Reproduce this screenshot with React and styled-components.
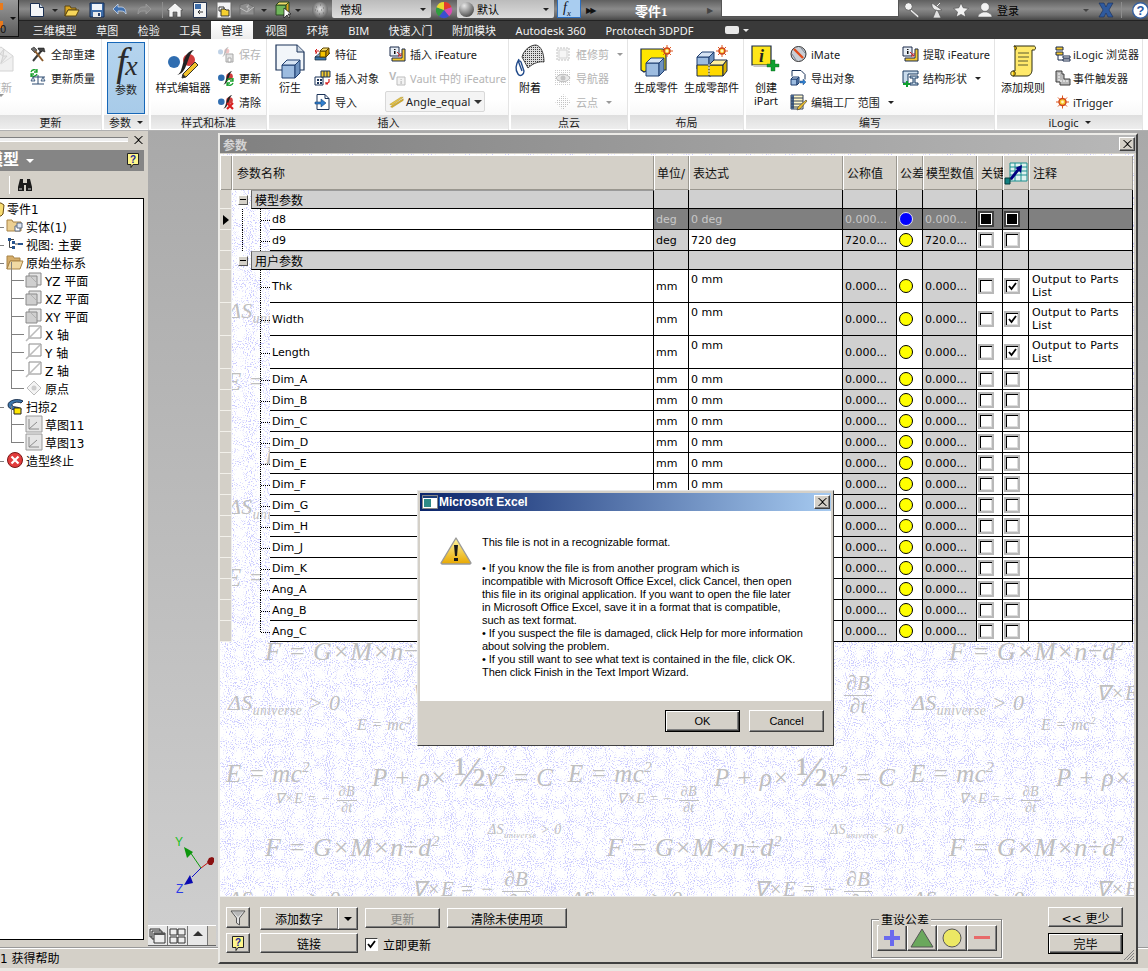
import React from "react";
import styled, { createGlobalStyle } from "styled-components";

const UI = `"DejaVu Sans", "Noto Sans CJK SC", sans-serif`;
const RIBBON_FONT = `"Noto Sans", "Noto Sans CJK SC", sans-serif`;
const SERIF = `"Liberation Serif", serif`;
const FACE = "#d4d0c8";

const Global = createGlobalStyle`
  html, body { margin: 0; padding: 0; background: ${FACE}; }
  #root { width: 1148px; height: 971px; }
  * { box-sizing: border-box; }
`;

const Page = styled.div`
  position: relative;
  width: 1148px;
  height: 971px;
  overflow: hidden;
  display: flex;
  flex-direction: column;
  font-family: ${UI};
  font-size: 11px;
  color: #000;
  background: ${FACE};
`;

/* ---------- icons ---------- */

const IconSvg = styled.svg`
  display: block;
  flex: none;
  overflow: visible;
`;

const Icon = ({ w = 16, h = 16, vb, children }) => (
  <IconSvg width={w} height={h} viewBox={vb || `0 0 ${w} ${h}`}>
    {children}
  </IconSvg>
);

const Cube = ({ x = 0, y = 0, s = 12, d = 4, front = "#9dbce0", top = "#d5e3f3", side = "#6f93c0", line = "#1f3f70" }) => (
  <g stroke={line} strokeWidth="1" strokeLinejoin="round">
    <path d={`M${x} ${y + d}h${s}v${s}h-${s}z`} fill={front} />
    <path d={`M${x} ${y + d}l${d} -${d}h${s}l-${d} ${d}z`} fill={top} />
    <path d={`M${x + s} ${y + d}l${d} -${d}v${s}l-${d} ${d}z`} fill={side} />
  </g>
);

const Spark = ({ x, y, r = 5 }) => (
  <g>
    <path d={`M${x - r - 2} ${y}h${2 * r + 4}M${x} ${y - r - 2}v${2 * r + 4}M${x - r} ${y - r}l${2 * r} ${2 * r}M${x + r} ${y - r}l-${2 * r} ${2 * r}`} stroke="#e05a20" strokeWidth="1" />
    <circle cx={x} cy={y} r={r - 1} fill="#f7c52a" stroke="#d0451c" strokeWidth="1.4" />
    <circle cx={x} cy={y} r={1.4} fill="#fff6c0" />
  </g>
);

const StyleMark = () => (
  <g>
    <circle cx="6" cy="14" r="6" fill="#2f6db0" />
    <circle cx="21" cy="12" r="6" fill="#d23c3c" />
    <path d="M8 27C17 27 12 4 26 2C19 6 20 27 8 27z" fill="#222" />
  </g>
);

const Pencil = () => (
  <g>
    <path d="M27 14l3 3-12 12-4 1 1-4z" fill="#f2c22c" stroke="#33302a" strokeWidth="1" />
    <path d="M15 26l3 3-4 1z" fill="#333" />
  </g>
);

const GreenArrows = ({ x = 0, y = 0 }) => (
  <path transform={`translate(${x} ${y})`} d="M1 3a3.5 3.5 0 0 1 6-1M7 0v3H4M7 5a3.5 3.5 0 0 1-6 1M1 8V5h3" fill="none" stroke="#18a02c" strokeWidth="1.3" />
);

const Icons = {
  newDoc: (
    <Icon>
      <path d="M1.5 1.5h9l4 4v9h-13z" fill="#f4f6f8" stroke="#1b2f50" />
      <path d="M10.5 1.5v4h4" fill="#c9d3de" stroke="#1b2f50" />
    </Icon>
  ),
  open: (
    <Icon>
      <path d="M1 4h5l1 2h5v2H4l-3 6z" fill="#d9a520" stroke="#5a4510" />
      <path d="M4 8h11l-3 6H1z" fill="#f7d65a" stroke="#5a4510" />
    </Icon>
  ),
  save: (
    <Icon>
      <path d="M1 1h14v14H1z" fill="#3d6ca8" stroke="#152a50" />
      <path d="M3 2h10v6H3z" fill="#eef3fa" />
      <path d="M4 10h8v5H4z" fill="#e9eaec" />
      <path d="M9 11h2v3H9z" fill="#25406e" />
    </Icon>
  ),
  undo: (
    <Icon>
      <path d="M6 2L1 7l5 5V9h3c2.5 0 4 1 5 3 0-5-2-7-5-7H6z" fill="#3f6fae" stroke="#c9d7ea" strokeWidth=".8" />
    </Icon>
  ),
  redo: (
    <Icon>
      <path d="M10 2l5 5-5 5V9H7c-2.5 0-4 1-5 3 0-5 2-7 5-7h3z" fill="#8a8a8a" stroke="#9c9c9c" strokeWidth=".8" />
    </Icon>
  ),
  home: (
    <Icon>
      <path d="M8 1L0 8h2v7h4v-5h4v5h4V8h2z" fill="#f2f2f2" stroke="#444" strokeWidth=".6" />
    </Icon>
  ),
  docArrow: (
    <Icon w={14}>
      <path d="M.5.5h13v15H.5z" fill="#f3f3f3" stroke="#26344e" />
      <path d="M2 2h6v5H2z" fill="#3d6ca8" />
      <path d="M10 10H5M7 8l-2 2 2 2" fill="none" stroke="#333" />
    </Icon>
  ),
  clip: (
    <Icon>
      <path d="M1 0h14v16H1z" fill="#f5f5f5" stroke="#6b6b6b" />
      <path d="M3 5h5v4H3z" fill="#fff" stroke="#333" />
      <path d="M5 7h4l1 1h3v6H5z" fill="#f5d030" stroke="#333" />
    </Icon>
  ),
  mail: (
    <Icon>
      <path d="M1 3l7-2 7 4v8H1z" fill="#8d8d8d" stroke="#6a6a6a" />
      <path d="M1 6l7 4 7-5" fill="none" stroke="#c0c0c0" />
      <path d="M7 5l3-3-1 4h2l-3 4 1-4z" fill="#bcbcbc" />
    </Icon>
  ),
  cubeCursor: (
    <Icon>
      <Cube x={0} y={0} s={10} d={3} front="#6fb55a" top="#f0dc6a" side="#d9a520" line="#2a4a20" />
      <path d="M8 6l0 10 3-3 2 3 1-1-2-3h3z" fill="#fff" stroke="#111" strokeWidth=".7" />
    </Icon>
  ),
  disc: (
    <Icon>
      <defs>
        <radialGradient id="discG" cx=".5" cy=".45" r=".6">
          <stop offset="0" stopColor="#e8e8e8" />
          <stop offset="1" stopColor="#565656" />
        </radialGradient>
      </defs>
      <circle cx="8" cy="8" r="8" fill="url(#discG)" />
      <path d="M4 5h1M8 3h1M11 6h1M5 9h1M9 8h1M7 12h1M11 11h1M3 8h1" stroke="#6d6d6d" />
    </Icon>
  ),
  wheel: (
    <Icon>
      <path d="M8 8V0a8 8 0 0 1 7.5 5.2z" fill="#e23b2e" />
      <path d="M8 8l7.5-2.8A8 8 0 0 1 13 14.3z" fill="#d84cb0" />
      <path d="M8 8l5 6.3A8 8 0 0 1 3 14.3z" fill="#3a4fd0" />
      <path d="M8 8l-5 6.3A8 8 0 0 1 .5 5.2z" fill="#2f9e3f" />
      <path d="M8 8L.5 5.2A8 8 0 0 1 8 0z" fill="#e9d92e" />
    </Icon>
  ),
  sphere: (
    <Icon w={15} h={15}>
      <defs>
        <radialGradient id="sphG" cx=".35" cy=".25" r=".8">
          <stop offset="0" stopColor="#e8e8e8" />
          <stop offset="1" stopColor="#4a4a4a" />
        </radialGradient>
      </defs>
      <circle cx="7.5" cy="7.5" r="7.5" fill="url(#sphG)" />
    </Icon>
  ),
  key: (
    <Icon>
      <circle cx="4.5" cy="4.5" r="3.8" fill="#f4f4f4" stroke="#555" strokeWidth=".8" />
      <path d="M7 7l8 7-1 2-8-7z" fill="#e9e9e9" stroke="#555" strokeWidth=".7" />
    </Icon>
  ),
  dish: (
    <Icon>
      <path d="M3 1c-1 6 4 9 10 7z" fill="#ececec" stroke="#555" strokeWidth=".7" />
      <path d="M7 8l-3 8h8l-3-7z" fill="#e0e0e0" stroke="#555" strokeWidth=".7" />
      <path d="M8 4l3-3" stroke="#eee" />
    </Icon>
  ),
  star: (
    <Icon>
      <path d="M8 1l2.2 4.8 5.3.6-4 3.5 1.2 5.1L8 12.4 3.3 15l1.2-5.1-4-3.5 5.3-.6z" fill="#f2f2f2" stroke="#444" strokeWidth=".6" />
    </Icon>
  ),
  user: (
    <Icon>
      <circle cx="8" cy="5" r="4.3" fill="#f4f4f4" stroke="#555" strokeWidth=".5" />
      <path d="M1 15c0-3 3-4 5-5h4c2 1 5 2 5 5z" fill="#f0f0f0" stroke="#555" strokeWidth=".5" />
    </Icon>
  ),
  xLogo: (
    <Icon>
      <path d="M1 1h5l2 4 2-4h5l-4 7 4 7h-5l-2-4-2 4H1l4-7z" fill="#2f5a9e" stroke="#172c56" strokeWidth=".6" />
    </Icon>
  ),
  helpRound: (
    <Icon w={17} h={17}>
      <circle cx="8.5" cy="8.5" r="7.8" fill="#fff" stroke="#355f9e" strokeWidth="1.4" />
      <text x="8.5" y="13" textAnchor="middle" fontSize="13" fontWeight="700" fill="#2a5aa5" fontFamily="Liberation Sans">?</text>
    </Icon>
  ),
  mailBig: (
    <Icon w={26} h={26}>
      <path d="M1 8L13 1l12 9v15H1z" fill="#f0f0f0" stroke="#d4d4d4" />
      <path d="M1 9l12 9 12-8" fill="none" stroke="#dcdcdc" />
      <path d="M12 8l4-5-1 7h4l-6 7 2-7z" fill="#e6e6e6" stroke="#d2d2d2" />
    </Icon>
  ),
  tools: (
    <Icon>
      <path d="M3 15L12 4" stroke="#3a3a3a" strokeWidth="2" />
      <path d="M1 3l3-2 3 3-2 3z" fill="#6e6e6e" stroke="#222" strokeWidth=".6" />
      <path d="M13 15L5 5" stroke="#8a5a2a" strokeWidth="2" />
      <path d="M8 2h6l1 4-3-1-1 1-3-3z" fill="#444" stroke="#111" strokeWidth=".5" />
    </Icon>
  ),
  scale: (
    <Icon>
      <GreenArrows x={0} y={-1} />
      <path d="M8 5v9M2 14h12M3 7h12" stroke="#2c4a70" fill="none" />
      <path d="M1 11l2-4 2 4zM11 11l2-4 2 4z" fill="#d8e0ea" stroke="#2c4a70" strokeWidth=".8" />
    </Icon>
  ),
  styleBig: (
    <Icon w={31} h={31}>
      <StyleMark />
      <Pencil />
    </Icon>
  ),
  styleSave: (
    <Icon>
      <g opacity=".3">
        <g transform="scale(.42)"><StyleMark /></g>
      </g>
      <path d="M8 8h7v8H8z" fill="#e4e4e4" stroke="#a8a8a8" />
      <path d="M10 12h3v4h-3z" fill="#fff" stroke="#a8a8a8" />
    </Icon>
  ),
  styleUpdate: (
    <Icon>
      <g transform="scale(.55)"><StyleMark /></g>
      <GreenArrows x={8} y={8} />
    </Icon>
  ),
  styleClear: (
    <Icon>
      <g transform="scale(.55)"><StyleMark /></g>
      <path d="M9 9l6 6M15 9l-6 6" stroke="#d81e1e" strokeWidth="2.2" />
    </Icon>
  ),
  derive: (
    <Icon w={30} h={34}>
      <path d="M1 1h21l7 7v18H1z" fill="#f2f6fa" stroke="#1a3258" strokeWidth="1.2" />
      <path d="M22 1v7h7" fill="#cfd9e5" stroke="#1a3258" />
      <Cube x={7} y={16} s={13} d={5} />
    </Icon>
  ),
  feature: (
    <Icon w={17}>
      <path d="M1 11l5-4h10l-4 4z" fill="#8bb3d9" stroke="#123" strokeWidth=".7" />
      <path d="M1 11h11v3H1z" fill="#3d78ad" stroke="#123" strokeWidth=".7" />
      <Cube x={6} y={2} s={6} d={3} front="#f5c400" top="#ffe36e" side="#d09a00" line="#5a4200" />
      <path d="M2 8V5h3M3 3L1 5l2 2" fill="none" stroke="#d52020" />
    </Icon>
  ),
  insertObj: (
    <Icon w={17}>
      <path d="M1 7h8v8H1z" fill="#fff" stroke="#1a3258" />
      <path d="M3 9h2v2H3zM6 9h2v2H6zM3 12h2v2H3zM6 12h2v2H6z" fill="#1a3258" />
      <path d="M7 1h9v6H7z" fill="#f5c92e" stroke="#1a3258" />
      <path d="M10 1v6M13 1v6" stroke="#1a3258" />
      <path d="M15 9v3l-3 2M12 12v2h2" fill="none" stroke="#d52020" strokeWidth="1.2" />
    </Icon>
  ),
  importDoc: (
    <Icon w={16}>
      <path d="M3 .5h8l4 4v11H3z" fill="#fff" stroke="#1a3258" />
      <path d="M11 .5v4h4" fill="none" stroke="#1a3258" />
      <path d="M1 8h6V5l5 4-5 4v-3H1z" fill="#2f7fd0" stroke="#14406e" strokeWidth=".6" />
    </Icon>
  ),
  iFeat: (
    <Icon w={17}>
      <path d="M1 1h9v9H1z" fill="#e8eef5" stroke="#1a2a4a" />
      <path d="M5 3h1.5v1H5zM5 5h1.5v3H5z" fill="#111" />
      <path d="M8 6l4 4M12 7v3H9" fill="none" stroke="#d52020" />
      <path d="M13 3h3v12H3v-3h10z" fill="#f5c92e" stroke="#1a2a4a" />
    </Icon>
  ),
  vault: (
    <Icon w={17}>
      <text x="0" y="10" fontSize="11" fontWeight="700" fill="#b8b8b8" fontFamily="Liberation Sans">V</text>
      <path d="M8 7h8v8H8z" fill="#f2f2f2" stroke="#bdbdbd" />
      <path d="M11.5 9h1.2v1h-1.2zM11.5 11h1.2v3h-1.2z" fill="#bdbdbd" />
    </Icon>
  ),
  beam: (
    <Icon w={15} h={12} vb="0 0 19 14">
      <path d="M1 10L15 1h3L4 11z" fill="#e9c84a" stroke="#a88a20" strokeWidth=".6" />
      <path d="M2 13L18 3v2L4 14z" fill="#d8b030" stroke="#a88a20" strokeWidth=".6" />
    </Icon>
  ),
  attach: (
    <Icon w={30} h={36}>
      <defs>
        <pattern id="dotP" width="2" height="2" patternUnits="userSpaceOnUse">
          <rect width="1" height="1" fill="#3a3a3a" />
        </pattern>
      </defs>
      <path d="M7 14C9 6 16 2 21 2c5 1 8 8 8 17-4-1-11 1-16 6-2-4-4-7-6-11z" fill="#ddd" stroke="#444" />
      <path d="M7 14C9 6 16 2 21 2c5 1 8 8 8 17-4-1-11 1-16 6-2-4-4-7-6-11z" fill="url(#dotP)" />
      <path d="M4 16c-3 5-4 11-1 15 2 3 6 1 6-3l-3-9c-1-2-3-1-2 1l3 8" fill="none" stroke="#214a8a" strokeWidth="1.4" />
    </Icon>
  ),
  cropBox: (
    <Icon>
      <path d="M2 2h12v12H2z" fill="#f6f6f6" stroke="#c2c2c2" strokeDasharray="2 1" />
      <path d="M4 4h8v8H4z" fill="none" stroke="#d4d4d4" />
    </Icon>
  ),
  eye: (
    <Icon>
      <path d="M0 0h16v16H0z" fill="url(#dotP)" opacity=".25" />
      <path d="M1 8c3-5 11-5 14 0-3 5-11 5-14 0z" fill="#e8e8e8" stroke="#bcbcbc" />
      <circle cx="8" cy="8" r="2.5" fill="#c4c4c4" />
    </Icon>
  ),
  cloud: (
    <Icon>
      <path d="M8 0l8 8-8 8-8-8z" fill="url(#dotP)" opacity=".3" />
    </Icon>
  ),
  makePart: (
    <Icon w={32} h={32}>
      <path d="M1 4h22l3 3v18H8l-4 2-3-2z" fill="#ffe600" stroke="#1a2a4a" strokeWidth="1.2" />
      <Cube x={6} y={13} s={13} d={5} />
      <Spark x={27} y={6} r={4} />
    </Icon>
  ),
  makeParts: (
    <Icon w={34} h={34}>
      <Cube x={2} y={8} s={12} d={5} />
      <path d="M2 21h14v11H2z" fill="#ffd900" stroke="#1a2a4a" />
      <path d="M14 21h14v11H14z" fill="#ffd900" stroke="#1a2a4a" />
      <path d="M14 21l5-5h13l-4 5z" fill="#fff0a0" stroke="#1a2a4a" />
      <path d="M28 21l4-5v11l-4 5z" fill="#d9b100" stroke="#1a2a4a" />
      <path d="M14 20v12" stroke="#fff" strokeDasharray="2 1" />
      <Spark x={27} y={7} r={4} />
    </Icon>
  ),
  iPart: (
    <Icon w={30} h={30}>
      <path d="M1 1h19v19H1z" fill="#ffe61a" stroke="#1a2a4a" strokeWidth="1.2" />
      <path d="M1 20l2 2h17l1-2" fill="#c8c8c8" />
      <text x="10.5" y="17" textAnchor="middle" fontFamily="Liberation Serif" fontStyle="italic" fontWeight="700" fontSize="18" fill="#222">i</text>
      <path d="M20 15h4v4h4v3h-4v4h-4v-4h-4v-3h4z" fill="#0fa030" stroke="#0a6020" strokeWidth=".4" />
    </Icon>
  ),
  iMate: (
    <Icon w={17}>
      <circle cx="8.5" cy="8" r="7.5" fill="#c9ced6" stroke="#333" />
      <path d="M4 3l9 9" stroke="#e04a1a" strokeWidth="2.4" />
      <path d="M2 8l4 6M11 2l4 5" stroke="#7d8694" />
    </Icon>
  ),
  exportObj: (
    <Icon w={17}>
      <path d="M2 .5h9l4 4v5M2 .5v6" fill="#fff" stroke="#1a3258" />
      <Cube x={1} y={7} s={6} d={2} />
      <path d="M10 11h3V9l3 3-3 3v-2h-3z" fill="#2f7fd0" stroke="#14406e" strokeWidth=".4" />
    </Icon>
  ),
  table: (
    <Icon w={17}>
      <path d="M1 1h12v14H1z" fill="#fff7c8" stroke="#33405a" />
      <path d="M1 1h3v14H1z" fill="#45648e" />
      <path d="M1 4h12M1 7h12M1 10h12M1 13h9" stroke="#33405a" />
      <path d="M16 6l1 1-7 8-3 1 1-3z" fill="#f2c22c" stroke="#333" strokeWidth=".6" />
    </Icon>
  ),
  shape: (
    <Icon w={17}>
      <path d="M1 1h15v3H6v9H1z" fill="#c9dbeb" stroke="#1a3a60" />
      <path d="M8 6h8v2h-3v5h3v2H8v-2h3V8H8z" fill="#c9dbeb" stroke="#1a3a60" />
      <path d="M1 13h3v-2h2v2h2v2H6v2H4v-2H1z" fill="#0fa030" />
    </Icon>
  ),
  scroll: (
    <Icon w={28} h={34}>
      <path d="M5 2h20c2 0 2 4 0 4h-2v20c0 3-2 6-5 6H4c-3 0-3-5 0-5h2V6C6 4 5 3 5 2z" fill="#ffe96a" stroke="#2a2a10" />
      <path d="M9 9h11M9 13h11M9 17h10M9 21h10" stroke="#5a5a30" />
      <path d="M5 2c3 0 3 4 1 4M4 27c3 0 3 5 0 5" fill="#e4b400" stroke="#2a2a10" />
    </Icon>
  ),
  ilogicBrowser: (
    <Icon w={17}>
      <path d="M2 1h7v3H2z" fill="#f5c92e" stroke="#1a2a4a" />
      <path d="M2 6h7v3H2z" fill="#f5c92e" stroke="#1a2a4a" />
      <path d="M9 10h7v2H9zM9 13h7v2H9z" fill="#fff" stroke="#1a2a4a" />
      <path d="M4 9v5h5" fill="none" stroke="#1a2a4a" />
    </Icon>
  ),
  eventTrig: (
    <Icon w={17}>
      <path d="M2 1h6v3h2v5h6v6H6v-3H2z" fill="#b8b8b8" stroke="#3d3d3d" />
      <path d="M5 3v8h9" fill="none" stroke="#fff" strokeDasharray="2 1" />
    </Icon>
  ),
  trigger: (
    <Icon w={17}>
      <Spark x={8.5} y={8} r={4.5} />
    </Icon>
  ),
  help: (
    <Icon w={12} h={15}>
      <path d="M.5.5h11v11H6l-2 3v-3H.5z" fill="#fff68a" stroke="#222" />
      <text x="6" y="9.5" textAnchor="middle" fontSize="10" fontWeight="700" fill="#1a2a9a" fontFamily="Liberation Sans">?</text>
    </Icon>
  ),
  binoculars: (
    <Icon w={16} h={14}>
      <path d="M3 1h3v4h4V1h3l2 8v4H9V7H7v6H1V9z" fill="#1b1b1b" />
      <path d="M2 10h3v2H2zM11 10h3v2h-3z" fill="#777" />
    </Icon>
  ),
  part: (
    <Icon w={4} h={15}>
      <path d="M-8 2h9l3 2-1 9-2 2H-8z" fill="#f8dc72" stroke="#6b4b10" />
      <path d="M-6 5h6v6h-6z" fill="#fff3b8" />
    </Icon>
  ),
  bodies: (
    <Icon w={16} h={16}>
      <path d="M0 2h5l1 2h8v9H0z" fill="#eccf92" stroke="#a88346" />
      <path d="M8 8h5v5H8z" fill="#fff" stroke="#5a6a85" />
      <path d="M10 5h5v5h-5z" fill="#dfe6f0" stroke="#5a6a85" />
    </Icon>
  ),
  views: (
    <Icon w={16} h={14}>
      <path d="M1 1h3v3H1zM5 4h3v3H5zM5 9h3v3H5zM11 6h5v2h-5z" fill="#26538e" />
      <path d="M2.5 4v6.5H5M4 2.5h3M8 7h3" stroke="#444" fill="none" />
    </Icon>
  ),
  folderOpen: (
    <Icon w={16} h={14}>
      <path d="M0 1h6l1 2h6v3H3l-3 8z" fill="#d6ae6a" stroke="#a88346" />
      <path d="M3 6h13l-3 8H0z" fill="#f1d9a3" stroke="#a88346" />
    </Icon>
  ),
  plane: (
    <Icon>
      <path d="M3 1h12v12H3z" fill="#e3e3e3" stroke="#8a8a8a" />
      <path d="M0 4h11v11H0z" fill="#cfcfcf" stroke="#8a8a8a" />
      <path d="M4 4l7 7" stroke="#b0b0b0" />
    </Icon>
  ),
  axis: (
    <Icon>
      <path d="M3 0h12v12H3z" fill="#fff" stroke="#8a8a8a" />
      <path d="M0 15L14 1" stroke="#bcbcbc" strokeWidth="1.6" />
    </Icon>
  ),
  origin: (
    <Icon>
      <path d="M8 1l7 7-7 7-7-7z" fill="#f4f4f4" stroke="#bdbdbd" />
      <circle cx="8" cy="8" r="2.5" fill="#cdcdcd" />
    </Icon>
  ),
  sweep: (
    <Icon w={16}>
      <path d="M1 7c0-5 10-7 15-4l-2 2C10 3 5 5 5 7c0 3 9 1 9 5l-4 2c2-3-9-1-9-7z" fill="#3d78ad" stroke="#12243f" strokeWidth=".9" />
      <path d="M7 10h7v6H7z" fill="#ffe600" stroke="#222" />
    </Icon>
  ),
  sketch: (
    <Icon>
      <path d="M0 0h16v16H0z" fill="#e5e5e5" stroke="#9a9a9a" />
      <path d="M3 13V3M3 13h10M3 13l8-7" stroke="#8c8c8c" fill="none" />
    </Icon>
  ),
  stopErr: (
    <Icon>
      <circle cx="8" cy="8" r="7.5" fill="#e23c3c" stroke="#7a1616" />
      <path d="M4.5 4.5l7 7M11.5 4.5l-7 7" stroke="#fff" strokeWidth="2.2" />
    </Icon>
  ),
  tableLink: (
    <Icon w={24} h={24}>
      <path d="M2 1h22v21H2z" fill="#d4d0c8" />
      <path d="M6 2h17v18H6z" fill="#dff2ef" stroke="#1a8f8f" />
      <path d="M6 6h17M6 10h17M6 14h17M11 2v18M17 2v18" stroke="#1a8f8f" />
      <path d="M5 18L13 8l-2-1 7-3-1 8-2-2-7 9z" fill="#000080" />
      <path d="M1 17h5v6H1z" fill="#128080" stroke="#063c3c" />
    </Icon>
  ),
  tick: (
    <Icon w={9} h={9}>
      <path d="M1 4l2.5 3L8 1" fill="none" stroke="#000" strokeWidth="1.8" />
    </Icon>
  ),
  funnel: (
    <Icon w={16} h={16}>
      <path d="M1 1h14L9.5 8v7l-3-2V8z" fill="#e4e4e4" stroke="#555" />
      <path d="M3 2h10L8 7z" fill="#b8b8b8" />
    </Icon>
  ),
  cascade: (
    <Icon w={17} h={16}>
      <path d="M1 1h10v8H1z" fill="#ddd" stroke="#333" />
      <path d="M3 3h10v8H3z" fill="#ddd" stroke="#333" />
      <path d="M5 5h11v10H5z" fill="#eee" stroke="#333" />
      <path d="M5 5h11v2H5z" fill="#555" />
    </Icon>
  ),
  tile: (
    <Icon w={17} h={16}>
      <path d="M1 1h7v6H1zM9 1h7v6H9zM1 9h7v6H1zM9 9h7v6H9z" fill="#eee" stroke="#333" />
    </Icon>
  ),
  warning: (
    <Icon w={32} h={28}>
      <defs>
        <linearGradient id="warnG" x1="0" y1="0" x2="0" y2="1">
          <stop offset="0" stopColor="#fff6a0" />
          <stop offset="1" stopColor="#e8a800" />
        </linearGradient>
      </defs>
      <path d="M16 1L31 26l-1 1H2l-1-1z" fill="url(#warnG)" stroke="#9a9a9a" strokeWidth="1.4" strokeLinejoin="round" />
      <path d="M14 8h4l-1 11h-2zM14 21h4v3h-4z" fill="#1a1a1a" />
    </Icon>
  ),
  excel: (
    <Icon w={16} h={14}>
      <path d="M.5.5h15v13H.5z" fill="#fff" stroke="#888" />
      <path d="M1 1h14v2H1z" fill="#1c3d78" />
      <path d="M2 4h7v8H2z" fill="#2e8a87" />
    </Icon>
  ),
  closeX: (
    <Icon w={9} h={8}>
      <path d="M1 0l3.5 3L8 0h1L5 4l4 4H8L4.5 5 1 8H0l4-4-4-4z" fill="#000" />
    </Icon>
  ),
};

/* ---------- title bar ---------- */

const TitleBar = styled.div`
  height: 20px;
  flex: none;
  display: flex;
  align-items: center;
  background: linear-gradient(#5f5f5f, #8a8a8a 45%, #6d6d6d 75%, #474747);
`;

const AppButton = styled.div`
  position: absolute;
  left: 0;
  top: 0;
  width: 19px;
  height: 37px;
  z-index: 3;
  background: linear-gradient(#9a9a9a, #5b5b5b);
  border-right: 1px solid #111;
  border-bottom: 1px solid #111;
  color: #fff;
  font-size: 10px;
`;

const OrangeBlock = styled.div`
  width: 3px;
  height: 7px;
  margin-top: ${(p) => p.$mt}px;
  background: #e87a1c;
`;

const AppDigit = styled.span`
  position: absolute;
  left: 0;
  bottom: 1px;
  color: #111;
`;

const AppCaret = styled.span`
  position: absolute;
  right: 2px;
  top: 17px;
  border-top: 3px solid #111;
  border-left: 3px solid transparent;
  border-right: 3px solid transparent;
`;

const Qat = styled.span`
  display: flex;
  align-items: center;
  flex: none;
  margin-left: ${(p) => p.$ml || 0}px;
`;

const Caret = styled.span`
  display: inline-block;
  flex: none;
  width: 0;
  height: 0;
  margin-left: ${(p) => p.$ml || 0}px;
  border-top: ${(p) => p.$s || 3}px solid ${(p) => p.$color || "#222"};
  border-left: ${(p) => p.$s || 3}px solid transparent;
  border-right: ${(p) => p.$s || 3}px solid transparent;
`;

const Divider = styled.span`
  width: 1px;
  height: 16px;
  margin-left: ${(p) => p.$ml}px;
  background: #8d8d8d;
  flex: none;
`;

const Combo = styled.div`
  width: ${(p) => p.$w}px;
  margin-left: ${(p) => p.$ml}px;
  height: 18px;
  align-self: flex-start;
  flex: none;
  display: flex;
  align-items: center;
  gap: 3px;
  padding: 0 5px 0 ${(p) => p.$pl}px;
  font-size: 11px;
  background: linear-gradient(#bcbcbc, #dcdcdc);
  border-radius: 0 0 2px 2px;
`;

const ComboText = styled.span`
  flex: 1;
`;

const FxButton = styled.div`
  width: 24px;
  height: 18px;
  margin-left: 3px;
  align-self: flex-start;
  flex: none;
  padding-left: 5px;
  background: #a9cdf0;
  border: 1px solid #2b6fc0;
  border-top: 0;
  font: italic 14px ${SERIF};
  color: #112;
`;

const TitleText = styled.span`
  width: 32px;
  margin-left: 40px;
  flex: none;
  font: bold 13px ${SERIF}, "Noto Sans CJK SC";
  color: #fff;
  white-space: nowrap;
`;

const Arrows = styled.span`
  width: 9px;
  margin-left: ${(p) => p.$ml}px;
  flex: none;
  font-size: 8px;
  color: ${(p) => p.$color || "#111"};
  letter-spacing: -2px;
`;

const SearchBox = styled.div`
  width: 178px;
  height: 17px;
  margin-left: 5px;
  flex: none;
  align-self: flex-start;
  background: #fff;
  border: 1px solid #555;
  border-top: 0;
`;

const LoginText = styled.span`
  margin-left: 4px;
  width: 24px;
  flex: none;
  font-size: 11px;
  white-space: nowrap;
`;

/* ---------- ribbon tabs ---------- */

const TabBar = styled.div`
  height: 19px;
  flex: none;
  display: flex;
  align-items: flex-end;
  padding-left: 23px;
  font-family: ${RIBBON_FONT};
  background: #3a3a3a;
  border-top: 1px solid #222;
`;

const Tab = styled.div`
  height: 18px;
  padding: 0 9.75px;
  margin-right: ${(p) => (p.$active ? 3 : 0)}px;
  display: flex;
  align-items: center;
  font-size: 11px;
  white-space: nowrap;
  color: ${(p) => (p.$active ? "#222" : "#f2f2f2")};
  background: ${(p) => (p.$active ? "linear-gradient(#fff, #ededed)" : "transparent")};
`;

const TabTool = styled.div`
  display: flex;
  align-items: center;
  gap: 4px;
  height: 18px;
  margin-left: 22px;
`;

const TabToolBox = styled.span`
  width: 14px;
  height: 8px;
  background: #e8e8e8;
  border-radius: 2px;
`;

/* ---------- ribbon ---------- */

const Ribbon = styled.div`
  height: 91px;
  flex: none;
  display: flex;
  gap: 2px;
  font-family: ${RIBBON_FONT};
  background: #fff;
  overflow: hidden;
`;

const RibbonGroup = styled.section`
  width: ${(p) => p.$w}px;
  flex: none;
  display: flex;
  flex-direction: column;
  border-right: 1px solid #e4e4e4;
`;

const GroupBody = styled.div`
  flex: 1;
  display: flex;
  padding-top: 3px;
  background: linear-gradient(#fff, #fff 80%, #f8f8f8);
`;

const GroupLabel = styled.div`
  height: 14px;
  margin-bottom: 1px;
  display: flex;
  align-items: center;
  justify-content: center;
  gap: 6px;
  font-size: 11px;
  color: #222;
  background: linear-gradient(#dedede, #eeeeee);
`;

const BigTool = styled.div`
  width: ${(p) => p.$w}px;
  margin-left: ${(p) => p.$ml || 0}px;
  flex: none;
  display: flex;
  flex-direction: column;
  align-items: center;
  line-height: 13px;
  font-size: 11px;
  text-align: center;
  white-space: nowrap;
  color: ${(p) => (p.$off ? "#b0b0b0" : "#111")};
`;

const IconSlot = styled.div`
  height: 39px;
  display: flex;
  align-items: flex-start;
  justify-content: center;
  padding-top: ${(p) => (p.$pt || 0) + 1}px;
`;

const ToolColumn = styled.div`
  width: ${(p) => p.$w}px;
  margin-left: ${(p) => p.$ml || 0}px;
  flex: none;
  display: flex;
  flex-direction: column;
`;

const SmallTool = styled.div`
  height: 24px;
  display: flex;
  align-items: center;
  gap: ${(p) => p.$gap || 5}px;
  font-size: 11px;
  white-space: nowrap;
  color: ${(p) => (p.$off ? "#b4b4b4" : "#222")};
`;

const IconBox = styled.span`
  width: 16px;
  flex: none;
  display: flex;
`;

const FxBig = styled.div`
  width: 38px;
  height: 72px;
  margin: 0 0 0 3px;
  display: flex;
  flex-direction: column;
  align-items: center;
  background: linear-gradient(#b5d4ee, #a8cbe9);
  border: 1px solid #1667b8;
  font-size: 11px;
  color: #222;
`;

const FxMark = styled.div`
  height: 38px;
  font: italic 40px/38px ${SERIF};
  letter-spacing: -2px;
  color: #2b2b2b;
  white-space: nowrap;
`;

const FxSub = styled.span`
  font-size: 28px;
`;

const StyleCombo = styled.div`
  width: 100px;
  height: 21px;
  margin: 1px 0 0 -4px;
  display: flex;
  align-items: center;
  gap: 2px;
  padding-left: 3px;
  font-size: 11px;
  color: #222;
  background: #f4f4f4;
  border: 1px solid #d8d8d8;
  border-radius: 2px;
  white-space: nowrap;
  letter-spacing: 0.1px;
`;

/* ---------- workspace ---------- */

const Workspace = styled.div`
  flex: 1;
  min-height: 0;
  display: flex;
  border-top: 1px solid #b0b0b0;
`;

const Browser = styled.aside`
  width: 148px;
  flex: none;
  display: flex;
  flex-direction: column;
  padding-top: 2px;
  background: ${FACE};
`;

const GripBar = styled.div`
  height: 13px;
  display: flex;
  align-items: center;
  gap: 5px;
  padding-right: 5px;
  flex: none;
`;

const GripLines = styled.div`
  flex: 1;
  height: 5px;
  margin-right: 1px;
  border-top: 1px solid #808080;
  border-bottom: 1px solid #fff;
  background: #eeeeee;
`;

const BrowserHead = styled.div`
  height: 21px;
  width: 144px;
  margin-top: 4px;
  flex: none;
  display: flex;
  align-items: center;
  overflow: hidden;
  font-size: 16px;
  line-height: 19px;
  font-weight: 700;
  color: #fff;
  background: #858585;
`;

const HeadTitle = styled.span`
  margin-left: -13px;
  margin-top: -2px;
  white-space: nowrap;
`;

const HeadHelp = styled.span`
  margin-left: auto;
  margin-right: 5px;
`;

const BrowserBar = styled.div`
  height: 27px;
  flex: none;
  display: flex;
  align-items: center;
`;

const BarSep = styled.span`
  width: 1px;
  height: 18px;
  margin: 0 7px 0 9px;
  background: #909090;
  border-right: 1px solid #fff;
`;

const TreeBox = styled.div`
  width: 144px;
  height: 742px;
  flex: none;
  background: #fff;
  border-top: 1px solid #000;
  border-right: 1px solid #000;
  border-bottom: 1px solid #000;
`;

const TreeRow = styled.div`
  position: relative;
  height: 18px;
  display: flex;
  align-items: center;
  gap: 3px;
  padding-left: ${(p) => (p.$level === 2 ? 26 : p.$level === 1 ? 7 : 0)}px;
  font-size: 12px;
  white-space: nowrap;

  &::before {
    content: ${(p) => (p.$level === 0 ? "none" : '""')};
    position: absolute;
    left: ${(p) => (p.$level === 2 ? 11 : 0)}px;
    top: ${(p) => (p.$level === 2 ? -9 : 9)}px;
    width: ${(p) => (p.$level === 2 ? 12 : 4)}px;
    height: ${(p) => (p.$level === 2 ? 18 : 1)}px;
    border-left: ${(p) => (p.$level === 2 ? "1px solid #808080" : "0")};
    border-bottom: 1px solid #808080;
  }
`;

const Viewport = styled.main`
  position: relative;
  flex: 1;
  background: linear-gradient(#a9a9a9, #cfcfcf);
`;

const TriadBox = styled.div`
  position: absolute;
  left: 20px;
  top: 703px;
`;

const DocTabs = styled.div`
  position: absolute;
  left: 0;
  top: 794px;
  display: flex;
  width: 68px;
  height: 21px;
  background: ${FACE};
  border-top: 1px solid #fff;
  border-bottom: 1px solid #666;
`;

const DocTab = styled.div`
  width: 20px;
  display: flex;
  align-items: center;
  justify-content: center;
  background: #e8e8e8;
  border-right: 1px solid #777;
`;

const UpArrow = styled.span`
  border-bottom: 5px solid #333;
  border-left: 5px solid transparent;
  border-right: 5px solid transparent;
  margin-bottom: 5px;
`;

const StatusBar = styled.div`
  height: 24px;
  flex: none;
  display: flex;
  align-items: center;
  font-size: 12px;
  padding-bottom: 2px;
  border-top: 1px solid #999;
  border-bottom: 3px solid #e9e7e2;
  box-shadow: inset 0 1px #fff;
`;

/* ---------- parameter window ---------- */

const ParamWindow = styled.div`
  position: absolute;
  left: 218px;
  top: 133px;
  width: 920px;
  height: 831px;
  z-index: 2;
  display: flex;
  flex-direction: column;
  background: ${FACE};
  border: 2px solid;
  border-color: #ecebe7 #404040 #404040 #ecebe7;
`;

const ParamTitle = styled.div`
  height: 18px;
  flex: none;
  display: flex;
  align-items: center;
  justify-content: space-between;
  padding: 0 1px 0 3px;
  font-size: 12px;
  font-weight: 700;
  color: #d4d4d4;
  background: linear-gradient(90deg, #808080, #b8b8b8);
`;

const WinBtn = styled.div`
  width: ${(p) => p.$w || 16}px;
  height: 14px;
  display: flex;
  align-items: center;
  justify-content: center;
  background: ${FACE};
  border: 1px solid;
  border-color: #fff #404040 #404040 #fff;
  box-shadow: inset -1px -1px #808080;
`;

const GridCanvas = styled.div`
  position: relative;
  width: 914px;
  height: 743px;
  margin-top: 1px;
  flex: none;
  overflow: hidden;
  background: #fff;
  border-bottom: 1px solid #eee;
`;

const NoiseLayer = styled.svg`
  position: absolute;
  inset: 0;
  display: block;
`;

const Formula = styled.span`
  position: absolute;
  font-family: ${SERIF};
  font-style: italic;
  line-height: 1;
  letter-spacing: 0.4px;
  color: #bfbfbf;
  white-space: nowrap;
  transform: translateY(-50%);
`;

const Sup = styled.sup`
  font-size: 0.6em;
  line-height: 0;
  vertical-align: super;
`;

const Sub = styled.sub`
  font-size: 0.62em;
  line-height: 0;
`;

const BigHalf = styled.span`
  font-size: 1.7em;
  font-style: normal;
  line-height: 0;
`;

const Fraction = styled.span`
  display: inline-flex;
  flex-direction: column;
  align-items: center;
  vertical-align: middle;
  margin-left: 2px;
`;

const FractionTop = styled.span`
  border-bottom: 1px solid #bfbfbf;
  padding: 0 2px 1px;
`;

const Table = styled.div`
  position: relative;
  padding-top: 1px;
  width: 913px;
`;

const COLS = "35px 154px 54px 26px 54px 26px 26px 104px";

const Row = styled.div`
  display: grid;
  grid-template-columns: ${(p) => (p.$group ? "12px 19px 403px" : "12px 38px 384px")} ${COLS};
  height: ${(p) => p.$h}px;
`;

const Cell = styled.div`
  display: flex;
  align-items: ${(p) => (p.$top ? "flex-start" : "center")};
  padding: ${(p) => (p.$top ? "3px" : "0")} 0 0 ${(p) => (p.$pl === undefined ? 2 : p.$pl)}px;
  overflow: hidden;
  white-space: nowrap;
  font-size: 11px;
  color: ${(p) => p.$color || "#000"};
  background: ${(p) => p.$bg || "#fff"};
  border-right: 1px solid #000;
  border-bottom: 1px solid #000;
`;

const HeadCell = styled.div`
  display: flex;
  align-items: center;
  padding-left: ${(p) => (p.$pl === undefined ? 4 : p.$pl)}px;
  overflow: hidden;
  white-space: nowrap;
  font-size: 12px;
  color: #111;
  background: ${FACE};
  grid-column: ${(p) => (p.$span ? `span ${p.$span}` : "auto")};
  box-shadow: inset 1px 1px #fff, inset -1px -1px #9a978f;
`;

const RowHead = styled.div`
  display: flex;
  align-items: center;
  justify-content: center;
  background: ${FACE};
  box-shadow: inset 0 -1px #f2f0ea;
  border-right: 1px solid #eee;
`;

const RowPointer = styled.span`
  border-left: 6px solid #000;
  border-top: 5px solid transparent;
  border-bottom: 5px solid transparent;
`;

const TreeCell = styled.div`
  position: relative;

  &::before {
    content: "";
    position: absolute;
    left: 28px;
    top: 0;
    bottom: ${(p) => (p.$last ? "50%" : "0")};
    border-left: 1px dotted #000;
  }
  &::after {
    content: "";
    position: absolute;
    left: 29px;
    right: 0;
    top: 50%;
    border-top: 1px dotted #000;
  }
`;

const OuterLine = styled.span`
  position: absolute;
  left: 10px;
  top: 0;
  bottom: 0;
  border-left: 1px dotted #000;
`;

const GroupTree = styled.div`
  position: relative;
`;

const MinusBox = styled.span`
  position: absolute;
  left: 6px;
  top: 5px;
  width: 10px;
  height: 10px;
  background: ${FACE};
  border: 1px solid;
  border-color: #fff #555 #555 #fff;

  &::after {
    content: "";
    position: absolute;
    left: 1px;
    right: 1px;
    top: 3px;
    border-top: 1px solid #000;
  }
`;

const GroupName = styled.div`
  display: flex;
  align-items: center;
  padding-left: 3px;
  font-size: 12px;
  background: #d0d0d0;
  border-top: 1px solid #9a9a9a;
  border-left: 1px solid #666;
  border-bottom: 1px solid #000;
  border-right: 1px solid #000;
`;

const Dot = styled.span`
  width: 14px;
  height: 14px;
  border-radius: 50%;
  flex: none;
  background: ${(p) => (p.$blue ? "#0000ff" : "#ffff00")};
  border: 1px solid ${(p) => (p.$blue ? "#e8e8e8" : "#000")};
`;

const Check = styled.span`
  width: 16px;
  height: 16px;
  flex: none;
  display: flex;
  align-items: center;
  justify-content: center;
  background: ${(p) => (p.$dark ? "#000" : "#fff")};
  border: 2px solid ${(p) => (p.$dark ? "#404040" : "#b8b8b8")};
  box-shadow: ${(p) => (p.$dark ? "inset 0 0 0 1px #fff" : "inset 1px 1px #000, inset -1px -1px #ddd")};
`;

const Note = styled.div`
  white-space: normal;
  line-height: 13px;
  letter-spacing: 0.2px;
`;

/* ---------- parameter footer ---------- */

const Footer = styled.div`
  position: relative;
  flex: 1;
  display: flex;
  padding: 10px 0 0 6px;
`;

const FootCol = styled.div`
  width: ${(p) => p.$w}px;
  margin-left: ${(p) => p.$ml || 0}px;
  flex: none;
  display: flex;
  flex-direction: column;
  gap: ${(p) => p.$gap || 0}px;
`;

const Btn = styled.div`
  width: ${(p) => (p.$w ? `${p.$w}px` : "100%")};
  height: ${(p) => p.$h || 21}px;
  margin-left: ${(p) => p.$ml || 0}px;
  display: flex;
  align-items: center;
  justify-content: center;
  flex: none;
  font-size: 12px;
  color: ${(p) => (p.$off ? "#8a8a86" : "#000")};
  background: ${FACE};
  border: 1px solid;
  border-color: ${(p) => (p.$strong ? "#000" : "#fff #404040 #404040 #fff")};
  box-shadow: ${(p) => (p.$strong ? "inset 1px 1px #fff, inset -1px -1px #404040, inset -2px -2px #808080" : "inset -1px -1px #808080")};
`;

const SplitLabel = styled.span`
  flex: 1;
  text-align: center;
`;

const SplitArrow = styled.span`
  width: 20px;
  height: 100%;
  display: flex;
  align-items: center;
  justify-content: center;
  border-left: 1px solid #808080;
  box-shadow: inset 1px 0 #fff;
`;

const BlackCaret = styled.span`
  border-top: 4px solid #000;
  border-left: 4px solid transparent;
  border-right: 4px solid transparent;
`;

const FootRow = styled.div`
  display: flex;
  align-items: ${(p) => (p.$center ? "center" : "flex-start")};
  margin-top: ${(p) => p.$mt || 0}px;
`;

const CheckLabel = styled.span`
  margin-left: 5px;
  font-size: 12px;
`;

const SunkenBox = styled.span`
  width: 13px;
  height: 13px;
  display: flex;
  align-items: center;
  justify-content: center;
  background: #fff;
  border: 1px solid;
  border-color: #404040 #fff #fff #404040;
`;

const TolGroup = styled.div`
  position: relative;
  width: 131px;
  height: 39px;
  margin: 12px 0 0 304px;
  flex: none;
  padding: 5px 0 0 5px;
  display: flex;
  border: 1px solid #808080;
  box-shadow: inset 1px 1px #fff, 1px 1px #fff;
`;

const TolLegend = styled.span`
  position: absolute;
  left: 7px;
  top: -6px;
  padding: 0 2px;
  height: 12px;
  line-height: 12px;
  overflow: hidden;
  font-size: 12px;
  background: ${FACE};
`;

const Grip = styled.span`
  position: absolute;
  right: 1px;
  bottom: 1px;
`;

/* ---------- excel dialog ---------- */

const ExcelDialog = styled.div`
  position: absolute;
  left: 417px;
  top: 490px;
  width: 417px;
  height: 256px;
  z-index: 4;
  display: flex;
  flex-direction: column;
  padding: 2px;
  background: ${FACE};
  border: 1px solid;
  border-color: #e8e8e8 #404040 #404040 #e8e8e8;
`;

const ExcelTitle = styled.div`
  height: 18px;
  flex: none;
  display: flex;
  align-items: center;
  gap: 1px;
  padding: 0 1px 0 2px;
  font: bold 12px "Liberation Sans", sans-serif;
  color: #fff;
  background: linear-gradient(90deg, #0a246a, #a6caf0);
`;

const ExcelClose = styled(WinBtn)`
  margin-left: auto;
`;

const ExcelBody = styled.div`
  height: 190px;
  flex: none;
  display: flex;
  padding: 26px 0 0 20px;
  background: #fff;
`;

const ExcelText = styled.div`
  margin: -1px 0 0 10px;
  font: 11px/13px "Liberation Sans", sans-serif;
  letter-spacing: -0.06px;
  white-space: nowrap;
  color: #000;
`;

const ExcelFirst = styled.div`
  margin-bottom: 13px;
`;

const ExcelFoot = styled.div`
  flex: 1;
  display: flex;
  justify-content: flex-end;
  gap: 9px;
  padding: 9px 7px 0 0;
`;

const ExcelBtn = styled(Btn)`
  width: 75px;
  height: 22px;
  font: 11px "Liberation Sans", sans-serif;
`;

/* ---------- data ---------- */

const WATERMARKS = [
  { dx: 0, dy: 0, size: 26, body: <>F = G×M×n÷d<Sup>2</Sup></> },
  { dx: -37, dy: 51, size: 22, body: <>ΔS<Sub>universe</Sub> &gt; 0</> },
  { dx: 92, dy: 73, size: 16, body: <>E = mc<Sup>2</Sup></> },
  { dx: -39, dy: 121, size: 25, body: <>E = mc<Sup>2</Sup></> },
  { dx: 107, dy: 125, size: 25, body: <>P + ρ× <BigHalf>½</BigHalf>v<Sup>2</Sup> = C</> },
  { dx: 10, dy: 148, size: 14, body: <>∇×E = − <Fraction><FractionTop>∂B</FractionTop><span>∂t</span></Fraction></> },
  { dx: 223, dy: 178, size: 14, body: <>ΔS<Sub>universe</Sub> &gt; 0</> },
  { dx: 147, dy: 43, size: 21, body: <>∇×E = − <Fraction><FractionTop>∂B</FractionTop><span>∂t</span></Fraction></> },
];

const TILE_X = [265, 607, 949];
const TILE_Y = [260, 456, 652, 848];

// formulas that would lie wholly behind the table or the excel box are left out
const isVisible = (x, y) => {
  if (x > 270 && y < 632) return false;
  if (x > 430 && x < 690 && y > 500 && y < 735) return false;
  return true;
};

const DIMS = ["Dim_A", "Dim_B", "Dim_C", "Dim_D", "Dim_E", "Dim_F", "Dim_G", "Dim_H", "Dim_J", "Dim_K", "Ang_A", "Ang_B", "Ang_C"];
const USERS = ["Thk", "Width", "Length"];
const GREY = "#d0d0d0";
const DARK = "#808080";

const TREE = [
  [0, "part", "零件1"],
  [1, "bodies", "实体(1)"],
  [1, "views", "视图: 主要"],
  [1, "folderOpen", "原始坐标系"],
  [2, "plane", "YZ 平面"],
  [2, "plane", "XZ 平面"],
  [2, "plane", "XY 平面"],
  [2, "axis", "X 轴"],
  [2, "axis", "Y 轴"],
  [2, "axis", "Z 轴"],
  [2, "origin", "原点"],
  [1, "sweep", "扫掠2"],
  [2, "sketch", "草图11"],
  [2, "sketch", "草图13"],
  [1, "stopErr", "造型终止"],
];

const TABS = ["三维模型", "草图", "检验", "工具", "管理", "视图", "环境", "BIM", "快速入门", "附加模块", "Autodesk 360", "Prototech 3DPDF"];

const Tool = ({ icon, off, gap, children }) => (
  <SmallTool $off={off} $gap={gap}>
    <IconBox>{Icons[icon]}</IconBox>
    {children}
  </SmallTool>
);

const Big = ({ icon, w, ml, pt, off, children }) => (
  <BigTool $w={w} $ml={ml} $off={off}>
    <IconSlot $pt={pt}>{Icons[icon]}</IconSlot>
    {children}
  </BigTool>
);

const GroupRow = ({ title }) => (
  <Row $h={19} $group>
    <RowHead />
    <GroupTree>
      <MinusBox />
    </GroupTree>
    <GroupName>{title}</GroupName>
    {COLS.split(" ").map((c, i) => (
      <Cell key={i} $bg={GREY} />
    ))}
  </Row>
);

const DataRow = ({ name, h, unit, expr, value, top, dark, checked, note, pointer, outer, last, unitBg }) => {
  const rowBg = dark ? DARK : undefined;
  const color = dark ? "#c8c8c8" : undefined;
  return (
    <Row $h={h}>
      <RowHead>{pointer && <RowPointer />}</RowHead>
      <TreeCell $last={last}>{outer && <OuterLine />}</TreeCell>
      <Cell>{name}</Cell>
      <Cell $bg={rowBg || unitBg} $color={color}>{unit}</Cell>
      <Cell $bg={rowBg} $color={color} $top={top}>{expr}</Cell>
      <Cell $bg={rowBg || GREY} $color={color}>{value}</Cell>
      <Cell $bg={rowBg}><Dot $blue={dark} /></Cell>
      <Cell $bg={rowBg || GREY} $color={color}>{value}</Cell>
      <Cell $bg={rowBg} $pl={1}><Check $dark={dark} /></Cell>
      <Cell $bg={rowBg} $pl={1}><Check $dark={dark}>{checked && Icons.tick}</Check></Cell>
      <Cell $bg={rowBg} $pl={3}>{note && <Note>{note}</Note>}</Cell>
    </Row>
  );
};

const Triad = () => (
  <svg width="60" height="70" viewBox="0 0 60 70">
    <path d="M22 18L33 34" stroke="#0a9a0a" strokeWidth="1" />
    <path d="M33 34L41 28" stroke="#c01010" strokeWidth="1" />
    <path d="M33 34L24 43" stroke="#1010c8" strokeWidth="1" />
    <path d="M16 13l9 5-6 6z" fill="#0c960c" />
    <path d="M41 24l3-1 2 1 0 4-2 3-3 0-2-3z" fill="#8a1010" />
    <path d="M22 41l3 8-9 2z" fill="#0a0ab0" />
    <text x="7" y="12" fontSize="12" fill="#22c022" fontFamily="Liberation Sans">Y</text>
    <text x="8" y="59" fontSize="12" fill="#2a3ae8" fontFamily="Liberation Sans">Z</text>
  </svg>
);

export default function App() {
  return (
    <Page>
      <Global />

      <AppButton>
        <OrangeBlock $mt={3} />
        <OrangeBlock $mt={11} />
        <AppCaret />
        <AppDigit>0</AppDigit>
      </AppButton>

      <TitleBar>
        <Qat $ml={29}>{Icons.newDoc}</Qat>
        <Caret $ml={7} />
        <Qat $ml={6}>{Icons.open}</Qat>
        <Qat $ml={9}>{Icons.save}</Qat>
        <Qat $ml={7}>{Icons.undo}</Qat>
        <Qat $ml={8}>{Icons.redo}</Qat>
        <Divider $ml={10} />
        <Qat $ml={4}>{Icons.home}</Qat>
        <Qat $ml={10}>{Icons.docArrow}</Qat>
        <Qat $ml={9}>{Icons.clip}</Qat>
        <Qat $ml={7}>{Icons.mail}</Qat>
        <Caret $ml={6} />
        <Qat $ml={9}>{Icons.cubeCursor}</Qat>
        <Caret $ml={3} />
        <Qat $ml={11}>{Icons.disc}</Qat>
        <Combo $w={99} $ml={4} $pl={8}>
          <ComboText>常规</ComboText>
          <Caret />
        </Combo>
        <Qat $ml={5}>{Icons.wheel}</Qat>
        <Combo $w={97} $ml={5} $pl={2}>
          {Icons.sphere}
          <ComboText>默认</ComboText>
          <Caret />
        </Combo>
        <FxButton>
          f<Sub>x</Sub>
        </FxButton>
        <Arrows $ml={5}>▶▶</Arrows>
        <TitleText>零件1</TitleText>
        <Arrows $ml={40} $color="#444">▶</Arrows>
        <SearchBox />
        <Qat $ml={5}>{Icons.key}</Qat>
        <Qat $ml={9}>{Icons.dish}</Qat>
        <Qat $ml={8}>{Icons.star}</Qat>
        <Qat $ml={8}>{Icons.user}</Qat>
        <LoginText>登录</LoginText>
        <Caret $ml={62} $color="#444" />
        <Qat $ml={9}>{Icons.xLogo}</Qat>
        <Divider $ml={7} />
        <Qat $ml={10}>{Icons.helpRound}</Qat>
      </TitleBar>

      <TabBar>
        {TABS.map((t) => (
          <Tab key={t} $active={t === "管理"}>
            {t}
          </Tab>
        ))}
        <TabTool>
          <TabToolBox />
          <Caret $color="#e8e8e8" />
        </TabTool>
      </TabBar>

      <Ribbon>
        <RibbonGroup $w={102}>
          <GroupBody>
            <Big icon="mailBig" w={26} ml={-12} pt={3} off>
              更新
              <br />
              <Caret $color="#999" />
            </Big>
            <ToolColumn $w={70} $ml={16}>
              <Tool icon="tools">全部重建</Tool>
              <Tool icon="scale">更新质量</Tool>
            </ToolColumn>
          </GroupBody>
          <GroupLabel>更新</GroupLabel>
        </RibbonGroup>

        <RibbonGroup $w={45}>
          <GroupBody>
            <FxBig>
              <FxMark>
                f<FxSub>x</FxSub>
              </FxMark>
              参数
            </FxBig>
          </GroupBody>
          <GroupLabel>
            参数 <Caret />
          </GroupLabel>
        </RibbonGroup>

        <RibbonGroup $w={116}>
          <GroupBody>
            <Big icon="styleBig" w={56} ml={4} pt={5}>样式编辑器</Big>
            <ToolColumn $w={50} $ml={7}>
              <Tool icon="styleSave" off>保存</Tool>
              <Tool icon="styleUpdate">更新</Tool>
              <Tool icon="styleClear">清除</Tool>
            </ToolColumn>
          </GroupBody>
          <GroupLabel>样式和标准</GroupLabel>
        </RibbonGroup>

        <RibbonGroup $w={240}>
          <GroupBody>
            <Big icon="derive" w={30} ml={6} pt={1}>衍生</Big>
            <ToolColumn $w={75} $ml={9}>
              <Tool icon="feature">特征</Tool>
              <Tool icon="insertObj">插入对象</Tool>
              <Tool icon="importDoc">导入</Tool>
            </ToolColumn>
            <ToolColumn $w={115}>
              <Tool icon="iFeat">插入 iFeature</Tool>
              <Tool icon="vault" off>Vault 中的 iFeature</Tool>
              <StyleCombo>
                {Icons.beam}
                Angle_equal
                <Caret $ml={2} $s={4} $color="#333" />
              </StyleCombo>
            </ToolColumn>
          </GroupBody>
          <GroupLabel>插入</GroupLabel>
        </RibbonGroup>

        <RibbonGroup $w={117}>
          <GroupBody>
            <Big icon="attach" w={30} ml={4}>附着</Big>
            <ToolColumn $w={80} $ml={10}>
              <Tool icon="cropBox" off>框修剪 <Caret $ml={3} $color="#999" /></Tool>
              <Tool icon="eye" off>导航器</Tool>
              <Tool icon="cloud" off>云点 <Caret $ml={3} $color="#999" /></Tool>
            </ToolColumn>
          </GroupBody>
          <GroupLabel>点云</GroupLabel>
        </RibbonGroup>

        <RibbonGroup $w={114}>
          <GroupBody>
            <Big icon="makePart" w={44} ml={4} pt={2}>生成零件</Big>
            <Big icon="makeParts" w={55} ml={6} pt={1}>生成零部件</Big>
          </GroupBody>
          <GroupLabel>布局</GroupLabel>
        </RibbonGroup>

        <RibbonGroup $w={249}>
          <GroupBody>
            <Big icon="iPart" w={30} ml={5} pt={2}>
              创建
              <br />
              iPart
            </Big>
            <ToolColumn $w={112} $ml={9}>
              <Tool icon="iMate">iMate</Tool>
              <Tool icon="exportObj">导出对象</Tool>
              <Tool icon="table">编辑工厂 范围 <Caret $ml={3} /></Tool>
            </ToolColumn>
            <ToolColumn $w={85}>
              <Tool icon="iFeat">提取 iFeature</Tool>
              <Tool icon="shape">结构形状 <Caret $ml={3} /></Tool>
            </ToolColumn>
          </GroupBody>
          <GroupLabel>编写</GroupLabel>
        </RibbonGroup>

        <RibbonGroup $w={146}>
          <GroupBody>
            <Big icon="scroll" w={44} ml={4} pt={1}>添加规则</Big>
            <ToolColumn $w={90} $ml={9}>
              <Tool icon="ilogicBrowser" gap={3}>iLogic 浏览器</Tool>
              <Tool icon="eventTrig" gap={3}>事件触发器</Tool>
              <Tool icon="trigger" gap={3}>iTrigger</Tool>
            </ToolColumn>
          </GroupBody>
          <GroupLabel>
            iLogic <Caret />
          </GroupLabel>
        </RibbonGroup>
      </Ribbon>

      <Workspace>
        <Browser>
          <GripBar>
            <GripLines />
            {Icons.closeX}
          </GripBar>
          <BrowserHead>
            <HeadTitle>模型</HeadTitle>
            <Caret $ml={7} $s={4} $color="#fff" />
            <HeadHelp>{Icons.help}</HeadHelp>
          </BrowserHead>
          <BrowserBar>
            <BarSep />
            {Icons.binoculars}
          </BrowserBar>
          <TreeBox>
            {TREE.map(([level, icon, text]) => (
              <TreeRow key={text} $level={level}>
                {Icons[icon]}
                {text}
              </TreeRow>
            ))}
          </TreeBox>
        </Browser>
        <Viewport>
          <TriadBox>
            <Triad />
          </TriadBox>
          <DocTabs>
            <DocTab>{Icons.cascade}</DocTab>
            <DocTab>{Icons.tile}</DocTab>
            <DocTab>
              <UpArrow />
            </DocTab>
          </DocTabs>
        </Viewport>
      </Workspace>

      <StatusBar>1 获得帮助</StatusBar>

      <ParamWindow>
        <ParamTitle>
          参数
          <WinBtn>{Icons.closeX}</WinBtn>
        </ParamTitle>

        <GridCanvas>
          <NoiseLayer width="914" height="743">
            <filter id="speckle" x="0" y="0" width="100%" height="100%" colorInterpolationFilters="sRGB">
              <feTurbulence type="fractalNoise" baseFrequency="0.95" numOctaves="1" seed="4" result="fine" />
              <feTurbulence type="fractalNoise" baseFrequency="0.07" numOctaves="2" seed="9" result="wide" />
              <feComposite in="fine" in2="wide" operator="arithmetic" k1="0" k2="0.9" k3="0.12" k4="0" />
              <feColorMatrix values="0 0 0 0 0.8  0 0 0 0 0.8  0 0 0 0 1  9 0 0 0 -4.9" />
            </filter>
            <rect width="914" height="743" filter="url(#speckle)" />
          </NoiseLayer>

          {TILE_Y.map((ty) =>
            TILE_X.map((tx) =>
              WATERMARKS.filter((w) => isVisible(tx + w.dx, ty + w.dy)).map((w) => (
                <Formula
                  key={`${tx}-${ty}-${w.dx}`}
                  style={{ left: tx + w.dx - 220, top: ty + w.dy - 154, fontSize: w.size }}
                >
                  {w.body}
                </Formula>
              ))
            )
          )}

          <Table>
            <Row $h={35}>
              <HeadCell />
              <HeadCell $span={2} $pl={5}>参数名称</HeadCell>
              <HeadCell $pl={3}>单位/</HeadCell>
              <HeadCell>表达式</HeadCell>
              <HeadCell>公称值</HeadCell>
              <HeadCell $pl={3}>公差</HeadCell>
              <HeadCell $pl={3}>模型数值</HeadCell>
              <HeadCell>关键</HeadCell>
              <HeadCell $pl={1}>{Icons.tableLink}</HeadCell>
              <HeadCell>注释</HeadCell>
            </Row>
            <GroupRow title="模型参数" />
            <DataRow name="d8" h={21} unit="deg" expr="0 deg" value="0.000..." dark pointer outer />
            <DataRow name="d9" h={21} unit="deg" expr="720 deg" value="720.0..." unitBg={GREY} outer />
            <GroupRow title="用户参数" />
            {USERS.map((u) => (
              <DataRow key={u} name={u} h={33} unit="mm" expr="0 mm" value="0.000..." top checked note="Output to Parts List" />
            ))}
            {DIMS.map((d, i) => (
              <DataRow key={d} name={d} h={21} unit="mm" expr="0 mm" value="0.000..." last={i === DIMS.length - 1} />
            ))}
          </Table>
        </GridCanvas>

        <Footer>
          <FootCol $w={24} $gap={5}>
            <Btn>{Icons.funnel}</Btn>
            <Btn $h={20}>{Icons.help}</Btn>
          </FootCol>
          <FootCol $w={98} $ml={10} $gap={3}>
            <Btn $h={23}>
              <SplitLabel>添加数字</SplitLabel>
              <SplitArrow>
                <BlackCaret />
              </SplitArrow>
            </Btn>
            <Btn $h={20}>链接</Btn>
          </FootCol>
          <FootCol $w={202} $ml={7}>
            <FootRow $mt={1}>
              <Btn $w={75} $h={20} $off>更新</Btn>
              <Btn $w={120} $h={20} $ml={7}>清除未使用项</Btn>
            </FootRow>
            <FootRow $center $mt={8}>
              <SunkenBox>{Icons.tick}</SunkenBox>
              <CheckLabel>立即更新</CheckLabel>
            </FootRow>
          </FootCol>
          <TolGroup>
            <TolLegend>重设公差</TolLegend>
            <Btn $w={30} $h={26}>
              <Icon w={18} h={18}>
                <path d="M7 1h4v6h6v4h-6v6H7v-6H1V7h6z" fill="#6a6aee" />
              </Icon>
            </Btn>
            <Btn $w={30} $h={26}>
              <Icon w={24} h={20}>
                <path d="M12 1l11 18H1z" fill="#6aa85c" stroke="#555" />
              </Icon>
            </Btn>
            <Btn $w={30} $h={26}>
              <Icon w={20} h={20}>
                <circle cx="10" cy="10" r="9" fill="#ece864" stroke="#555" />
              </Icon>
            </Btn>
            <Btn $w={30} $h={26}>
              <Icon w={18} h={4}>
                <path d="M1 0h16v3H1z" fill="#e86a6a" />
              </Icon>
            </Btn>
          </TolGroup>
          <FootCol $w={75} $ml={46} $gap={6}>
            <Btn $h={20}>&lt;&lt; 更少</Btn>
            <Btn $h={21} $strong>完毕</Btn>
          </FootCol>
          <Grip>
            <Icon w={12} h={12}>
              <path d="M11 1L1 11M11 4l-7 7M11 7l-4 4M11 10l-1 1" stroke="#808080" />
            </Icon>
          </Grip>
        </Footer>
      </ParamWindow>

      <ExcelDialog>
        <ExcelTitle>
          {Icons.excel}
          Microsoft Excel
          <ExcelClose>{Icons.closeX}</ExcelClose>
        </ExcelTitle>
        <ExcelBody>
          {Icons.warning}
          <ExcelText>
            <ExcelFirst>This file is not in a recognizable format.</ExcelFirst>
            • If you know the file is from another program which is<br />
            incompatible with Microsoft Office Excel, click Cancel, then open<br />
            this file in its original application. If you want to open the file later<br />
            in Microsoft Office Excel, save it in a format that is compatible,<br />
            such as text format.<br />
            • If you suspect the file is damaged, click Help for more information<br />
            about solving the problem.<br />
            • If you still want to see what text is contained in the file, click OK.<br />
            Then click Finish in the Text Import Wizard.
          </ExcelText>
        </ExcelBody>
        <ExcelFoot>
          <ExcelBtn $strong>OK</ExcelBtn>
          <ExcelBtn>Cancel</ExcelBtn>
        </ExcelFoot>
      </ExcelDialog>
    </Page>
  );
}
